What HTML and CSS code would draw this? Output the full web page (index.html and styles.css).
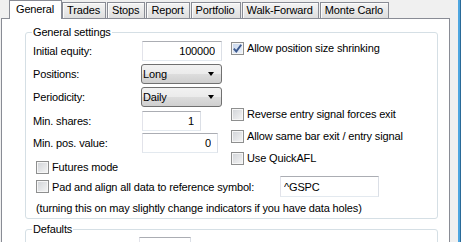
FILE: index.html
```html
<!DOCTYPE html>
<html lang="en">
<head>
    <meta charset="UTF-8">
    <title>Analysis Settings</title>
    <link rel="stylesheet" href="styles.css">
</head>
<body>
    <div class="window">
        <div class="dialog">
            <div class="tabs">
                <div class="tab active">General</div>
                <div class="tab">Trades</div>
                <div class="tab">Stops</div>
                <div class="tab">Report</div>
                <div class="tab">Portfolio</div>
                <div class="tab">Walk-Forward</div>
                <div class="tab">Monte Carlo</div>
            </div>
            <div class="panel">
                <fieldset class="group">
                    <legend>General settings</legend>
                    <div class="cols">
                        <div class="left">
                            <div class="form">
                                <span>Initial equity:</span>
                                <input class="field w-equity" type="text" value="100000">
                                <span>Positions:</span>
                                <div class="combo"><span>Long</span><i class="caret"></i></div>
                                <span>Periodicity:</span>
                                <div class="combo"><span>Daily</span><i class="caret"></i></div>
                                <span class="shifted">Min. shares:</span>
                                <input class="field w-shares shifted" type="text" value="1">
                                <span>Min. pos. value:</span>
                                <input class="field w-pos" type="text" value="0">
                            </div>
                            <label class="check indent futures"><span class="box"></span>Futures mode</label>
                        </div>
                        <div class="opts">
                            <label class="check first"><span class="box checked"><svg width="11" height="11" viewBox="0 0 11 11"><path d="M1.8 5.6 L4.3 8.4 L9.2 1.8" fill="none" stroke="#3d5a8f" stroke-width="1.9"/></svg></span>Allow position size shrinking</label>
                            <label class="check"><span class="box"></span>Reverse entry signal forces exit</label>
                            <label class="check"><span class="box"></span>Allow same bar exit / entry signal</label>
                            <label class="check"><span class="box"></span>Use QuickAFL</label>
                        </div>
                    </div>
                    <div class="pad-row indent">
                        <label class="check pad-label"><span class="box"></span>Pad and align all data to reference symbol:</label>
                        <input class="field w-symbol" type="text" value="^GSPC">
                    </div>
                    <p class="note">(turning this on may slightly change indicators if you have data holes)</p>
                </fieldset>
                <fieldset class="group defaults">
                    <legend>Defaults</legend>
                    <div class="form short">
                        <span></span>
                        <div class="field w-lot"></div>
                    </div>
                </fieldset>
            </div>
        </div>
        <div class="edge"></div>
    </div>
</body>
</html>
```

FILE: styles.css
```css
html, body {
    margin: 0;
    height: 100%;
    overflow: hidden;
}

body {
    background: #f0f0f0;
    font-family: "Liberation Sans", Arial, sans-serif;
    font-size: 11px;
    letter-spacing: -0.15px;
    color: #000;
}

.window {
    display: flex;
    width: 461px;
    height: 242px;
}

.dialog {
    width: 449px;
    padding-left: 1px;
}

.edge {
    margin-left: 8px;
    width: 2px;
    background: #4ea6e0;
    border-right: 1px solid #2a6a98;
}

/* tab strip */
.tabs {
    display: flex;
    align-items: flex-end;
    height: 19px;
    padding-left: 8px;
    position: relative;
    z-index: 1;
}

.tab {
    height: 15px;
    line-height: 15px;
    padding: 0 5px 0 4px;
    margin-bottom: 1px;
    margin-left: 1px;
    border: 1px solid #898c95;
    border-bottom: none;
    background: linear-gradient(#f4f4f4, #e9e9e9 50%, #dedede);
    box-shadow: inset 1px 1px 0 #fbfbfb;
    white-space: nowrap;
}

.tab.active {
    height: 18px;
    line-height: 16px;
    padding: 0 7px 0 6px;
    margin: 0;
    background: #fff;
    box-shadow: none;
}

.tab.active + .tab {
    margin-left: 0;
}

/* page body */
.panel {
    margin-top: -1px;
    height: 260px;
    box-sizing: border-box;
    border: 1px solid #898c95;
    background: #fff;
    padding: 7px 11px 0 23px;
}

.group {
    margin: 0;
    min-width: 0;
    border: 1px solid #d5dfe5;
    border-radius: 3px;
    padding: 2px 6px 3px 7px;
}

.group legend {
    padding: 0 1px;
    margin-left: -1px;
    line-height: 13px;
}

.defaults {
    margin-top: 4px;
    padding-top: 1px;
}

.cols {
    display: grid;
    grid-template-columns: 199px 1fr;
}

.form {
    display: grid;
    grid-template-columns: 108px auto;
    grid-auto-rows: 20px;
    row-gap: 3px;
    align-items: center;
    justify-items: start;
}

.form.short {
    grid-template-columns: 105px auto;
}

.form .shifted {
    margin-top: 1px;
}

.field {
    margin: 0 0 0 1px;
    height: 20px;
    box-sizing: border-box;
    border: 1px solid;
    border-color: #abadb3 #dbdfe6 #e3e9ef #e2e3ea;
    padding: 0 6px 0 3px;
    font: inherit;
    letter-spacing: inherit;
    color: #000;
    text-align: right;
    outline: none;
}

.w-equity { width: 80px; }
.w-shares { width: 59px; }
.w-pos { width: 76px; }
.w-lot { width: 52px; }

.pad-label {
    width: 243px;
}

.w-symbol {
    width: 99px;
    height: 21px;
    text-align: left;
}

.combo {
    display: flex;
    align-items: center;
    justify-content: space-between;
    width: 81px;
    height: 20px;
    box-sizing: border-box;
    border: 1px solid #707070;
    border-radius: 3px;
    padding: 0 7px 0 1px;
    background: linear-gradient(#f2f2f2, #ebebeb 50%, #dddddd 50%, #cfcfcf);
}

.caret {
    width: 0;
    height: 0;
    border-left: 3.5px solid transparent;
    border-right: 3.5px solid transparent;
    border-top: 4px solid #000;
}

/* checkboxes */
.check {
    display: flex;
    align-items: center;
    height: 14px;
    white-space: nowrap;
}

.box {
    display: flex;
    align-items: center;
    justify-content: center;
    width: 13px;
    height: 13px;
    box-sizing: border-box;
    margin-right: 3px;
    border: 1px solid #8e8f8f;
    background: linear-gradient(135deg, #d0d3d7, #f5f5f5);
    box-shadow: inset 0 0 0 1px #f6f6f6;
}

.box.checked {
    background: linear-gradient(135deg, #c6d5ec, #eef3fa);
}

.indent {
    margin-left: 3px;
}

.futures {
    margin-top: 7px;
}

.opts {
    display: flex;
    flex-direction: column;
    gap: 8px;
    margin-left: -1px;
}

.opts .first {
    margin-bottom: 44px;
}

.pad-row {
    display: flex;
    align-items: center;
    height: 21px;
    margin-top: 2px;
}

.note {
    margin: 5px 0 0 3px;
    line-height: 13px;
}
```
